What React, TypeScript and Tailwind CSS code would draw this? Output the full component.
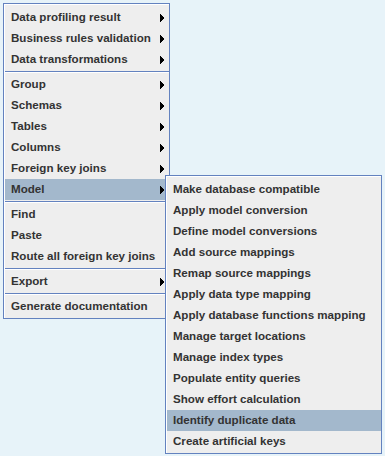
import React from 'react';

type Entry = { label: string; sub?: boolean; active?: boolean } | 'sep';

const mainItems: Entry[] = [
  { label: 'Data profiling result', sub: true },
  { label: 'Business rules validation', sub: true },
  { label: 'Data transformations', sub: true },
  'sep',
  { label: 'Group', sub: true },
  { label: 'Schemas', sub: true },
  { label: 'Tables', sub: true },
  { label: 'Columns', sub: true },
  { label: 'Foreign key joins', sub: true },
  { label: 'Model', sub: true, active: true },
  'sep',
  { label: 'Find' },
  { label: 'Paste' },
  { label: 'Route all foreign key joins' },
  'sep',
  { label: 'Export', sub: true },
  'sep',
  { label: 'Generate documentation' },
];

const modelItems: Entry[] = [
  { label: 'Make database compatible' },
  { label: 'Apply model conversion' },
  { label: 'Define model conversions' },
  { label: 'Add source mappings' },
  { label: 'Remap source mappings' },
  { label: 'Apply data type mapping' },
  { label: 'Apply database functions mapping' },
  { label: 'Manage target locations' },
  { label: 'Manage index types' },
  { label: 'Populate entity queries' },
  { label: 'Show effort calculation' },
  { label: 'Identify duplicate data', active: true },
  { label: 'Create artificial keys' },
];

function Arrow() {
  return (
    <svg width="4" height="8" viewBox="0 0 4 8" shapeRendering="crispEdges" className="shrink-0 mt-[2px]">
      <rect x="0" y="0" width="1" height="8" fill="#000" />
      <rect x="1" y="1" width="1" height="6" fill="#000" />
      <rect x="2" y="2" width="1" height="4" fill="#000" />
      <rect x="3" y="3" width="1" height="2" fill="#000" />
    </svg>
  );
}

function Menu({ items, width }: { items: Entry[]; width: string }) {
  return (
    <div className={`${width} bg-[#eeeeee] border border-[#6382bf]`}>
      {/* inner white highlight edge, like the Metal popup border */}
      <div className="border-l border-t border-white pt-[2px] pb-[1px]">
        {items.map((it, i) =>
          it === 'sep' ? (
            <div key={i} className="h-[4px] pt-[1px]">
              <div className="h-px bg-[#6382bf]" />
              <div className="h-px bg-white" />
            </div>
          ) : (
            <div
              key={i}
              className={`h-[21px] flex items-center justify-between pl-[6px] pr-[5px] pb-[2px] ${it.active ? 'bg-[#a3b8cc]' : ''}`}
            >
              <span className="text-[11.6px] font-bold leading-none text-[#333333] whitespace-nowrap">{it.label}</span>
              {it.sub && <Arrow />}
            </div>
          )
        )}
      </div>
    </div>
  );
}

export default function App() {
  return (
    <div
      className="relative w-[385px] h-[456px] bg-[#e7f3f9] pt-[3px] pl-[3px] overflow-hidden"
      style={{ fontFamily: '"Liberation Sans", Arial, sans-serif' }}
    >
      <Menu items={mainItems} width="w-[167px]" />
      <div className="absolute left-[165px] top-[175px]">
        <Menu items={modelItems} width="w-[217px]" />
      </div>
    </div>
  );
}
